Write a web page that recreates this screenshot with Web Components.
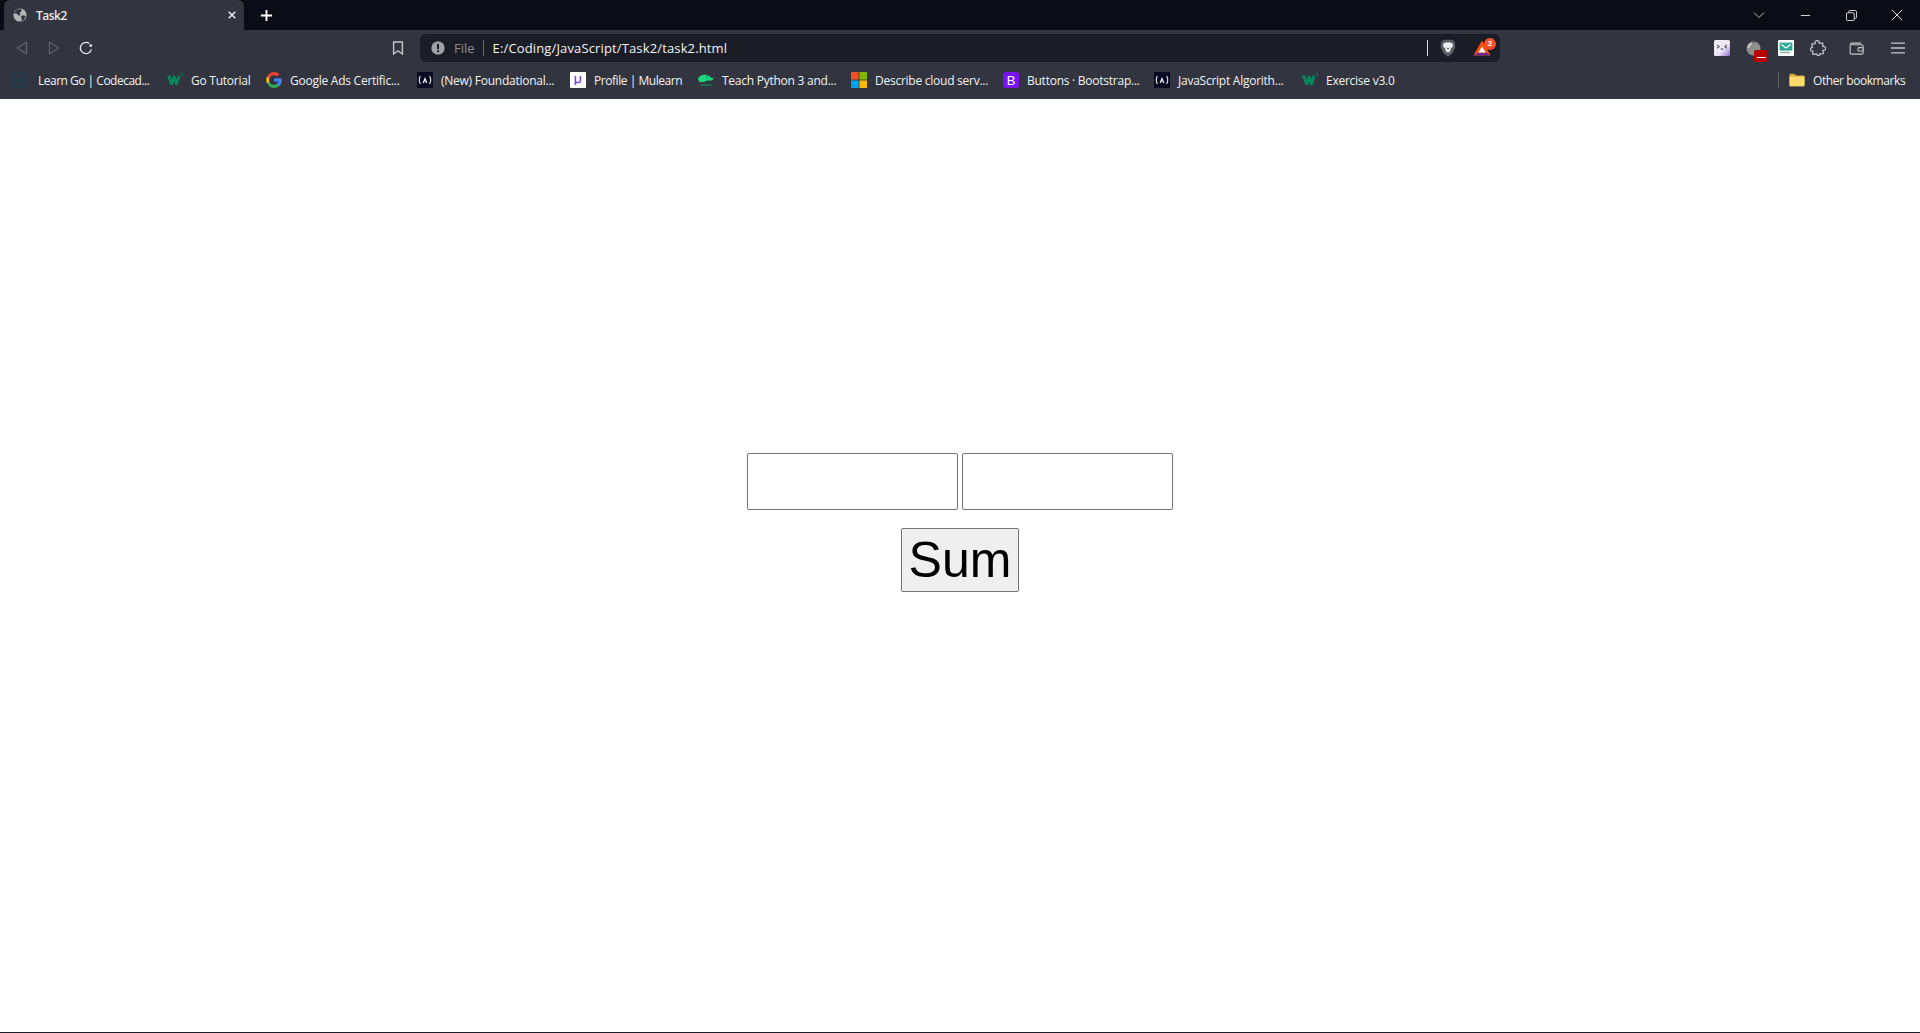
<!DOCTYPE html>
<html>
<head>
<meta charset="utf-8">
<title>Task2</title>
<style>
  html, body { margin: 0; height: 100%; background: #fff; }
  body { display: flex; flex-direction: column; height: 1033px; overflow: hidden; font-family: "Open Sans", "Liberation Sans", sans-serif; }
</style>
</head>
<body>
<browser-window>
  <tab-strip>
    <browser-tab>Task2</browser-tab>
  </tab-strip>
  <tool-bar>
    <address-bar scheme="File">E:/Coding/JavaScript/Task2/task2.html</address-bar>
  </tool-bar>
  <bookmark-bar>
    <bookmark-item icon="codecademy" width="113" style="--ls:-.5px">Learn Go | Codecad...</bookmark-item>
    <bookmark-item icon="w3" width="59">Go Tutorial</bookmark-item>
    <bookmark-item icon="google" width="111">Google Ads Certific...</bookmark-item>
    <bookmark-item icon="fcc" width="113">(New) Foundational...</bookmark-item>
    <bookmark-item icon="mulearn" width="88" style="--ls:-.45px">Profile | Mulearn</bookmark-item>
    <bookmark-item icon="python" width="113">Teach Python 3 and...</bookmark-item>
    <bookmark-item icon="microsoft" width="112">Describe cloud serv...</bookmark-item>
    <bookmark-item icon="bootstrap" width="111">Buttons · Bootstrap...</bookmark-item>
    <bookmark-item icon="fcc" width="108">JavaScript Algorith...</bookmark-item>
    <bookmark-item icon="w3" width="62">Exercise v3.0</bookmark-item>
    <bookmark-item slot="end" icon="folder" width="92" style="--ls:-.42px">Other bookmarks</bookmark-item>
  </bookmark-bar>
  <sum-page></sum-page>
</browser-window>

<script>
// all the little icons live here, keyed by name
const ICONS = {
  globe: `<svg viewBox="0 0 16 16"><circle cx="8" cy="8" r="7.500" fill="#b4b6ba"/><path d="M5 1.800 8.800 1 10 3.200 7.500 5.600 8.800 7.400 6.600 8.800 4 6.400 1.200 6.200C1.800 4.200 3.200 2.600 5 1.800ZM9 9.200 12.600 8.400 14.600 9.800 12.400 13.600 9.800 14.800 9.800 11.600Z" fill="#32353f"/></svg>`,
  close: `<svg viewBox="0 0 12 12"><path d="M2 2 10 10M10 2 2 10" stroke="#e8e9eb" stroke-width="1.800"/></svg>`,
  plus: `<svg viewBox="0 0 14 14"><path d="M7 1V13M1 7H13" stroke="#fff" stroke-width="2"/></svg>`,
  chevron: `<svg viewBox="0 0 12 12"><path d="M1 3.500 6 8.500 11 3.500" fill="none" stroke="#b9bbc0" stroke-width="1"/></svg>`,
  minimize: `<svg viewBox="0 0 12 12"><path d="M1 6H11" stroke="#e4e5e7" stroke-width="1"/></svg>`,
  restore: `<svg viewBox="0 0 12 12"><path d="M3 3V1.500C3 1 3.500 .5 4 .5H10C10.800 .5 11.500 1.200 11.500 2V8C11.500 8.500 11 9 10.500 9H9" fill="none" stroke="#e4e5e7"/><rect x=".5" y="3" width="8.500" height="8.500" rx="1.400" fill="none" stroke="#e4e5e7"/></svg>`,
  winclose: `<svg viewBox="0 0 12 12"><path d="M.8 .8 11.200 11.200M11.200 .8 .8 11.200" stroke="#e4e5e7" stroke-width="1"/></svg>`,
  back: `<svg viewBox="0 0 12 14"><path d="M10.500 1.200V12.800L1.200 7Z" fill="none" stroke="#5f626b" stroke-width="1.300" stroke-linejoin="round"/></svg>`,
  forward: `<svg viewBox="0 0 12 14"><path d="M1.500 1.200V12.800L10.800 7Z" fill="none" stroke="#5f626b" stroke-width="1.300" stroke-linejoin="round"/></svg>`,
  reload: `<svg viewBox="0 0 14 14"><path d="M12.400 8.400A5.600 5.600 0 1 1 10.200 2.400" fill="none" stroke="#e6e7e9" stroke-width="1.300"/><circle cx="11.800" cy="4.600" r="1.400" fill="#e6e7e9"/></svg>`,
  bookmark: `<svg viewBox="0 0 12 14"><path d="M1.600 1H10.400V13L6 9.800 1.600 13Z" fill="none" stroke="#c4c6ca" stroke-width="1.400"/></svg>`,
  info: `<svg viewBox="0 0 14 14"><circle cx="7" cy="7" r="6.700" fill="#9ea0a5"/><rect x="6" y="3" width="2" height="5" fill="#1a1d26"/><rect x="6" y="9.200" width="2" height="2" fill="#1a1d26"/></svg>`,
  brave: `<svg viewBox="0 0 16 18"><path d="M3.400 .8 12.600 .8 15 3.400 15.400 8 12.400 14.600 8 17.400 3.600 14.600 .6 8 1 3.400Z" fill="#5b5d66"/><path d="M3.400 4.400 6.400 3.200 8 3.800 9.600 3.200 12.600 4.400 13 7.200 10.800 9.600 10.200 12.200 8 13.600 5.800 12.200 5.200 9.600 3 7.200Z" fill="#f1f1f3"/><path d="M6.600 8.800 8 10 9.400 8.800" stroke="#5b5d66" fill="none"/></svg>`,
  bat: `<svg viewBox="0 0 18 16"><path d="M9 .4 17.600 15.400H.4Z" fill="#ff5000"/><path d="M.4 15.400 5 12.600H13L17.600 15.400Z" fill="#662d91"/><path d="M9 6.400 12.600 12.600H5.400Z" fill="#fff"/></svg>`,
  ext1: `<svg viewBox="0 0 16 16"><defs><linearGradient id="g1" x1="0" y1="0" x2="1" y2="1"><stop offset=".55" stop-color="#eeeaf4"/><stop offset="1" stop-color="#9a6fd6"/></linearGradient></defs><rect width="16" height="16" rx="1.500" fill="url(#g1)"/><path d="M3 5 5.400 6.600 3 8.200M13 5 10.600 6.600 13 8.200M6.800 9H9.200" fill="none" stroke="#2a2c38" stroke-width="1"/></svg>`,
  tomato: `<svg viewBox="0 0 16 16"><circle cx="7.500" cy="8.500" r="7" fill="#8e8e8e"/><path d="M2.500 8A5 5 0 0 1 6 3.600" fill="none" stroke="#c9c9c9" stroke-width="1.600"/><path d="M7.500 .5V3" stroke="#55565c" stroke-width="1.400"/></svg>`,
  ext3: `<svg viewBox="0 0 16 16"><rect width="16" height="16" rx="1" fill="#fff"/><rect x="1.600" y="2.600" width="12.800" height="8" fill="#2fa793"/><path d="M3.400 4.600 8 8 12.600 4.600" fill="none" stroke="#fff" stroke-width="1.200"/><rect x="2" y="11.800" width="10" height="1.400" fill="#8fa9a4"/></svg>`,
  puzzle: `<svg viewBox="0 0 16 16"><path d="M1.600 4.200 5.200 3.600C4.600 1.400 5.800 .6 7.200 .6 8.800 .6 9.800 1.800 9 3.200L12.800 3.200 12.800 6.600C14.400 5.800 15.600 7 15.600 8.400 15.600 9.800 14.200 10.800 12.800 10L13.400 13.600 9.800 13.800C10.200 14.800 9.400 15.400 8.400 15.400 7.400 15.400 6.400 14.800 6.800 13.800L2.800 14.400 2.800 11C1.600 11.400 .5 10.600 .5 9.200 .5 7.800 1.600 7.200 2.600 7.600Z" fill="none" stroke="#c4c6ca" stroke-width="1.200" stroke-linejoin="round"/></svg>`,
  wallet: `<svg viewBox="0 0 16 14"><path d="M1.200 3.400V11.600C1.200 12.400 1.800 13 2.600 13H13.600C14.400 13 15 12.400 15 11.600V4.400C15 3.600 14.400 3 13.600 3H2C1.400 3 1.200 2.400 1.600 2L2.400 1.200H12.800" fill="none" stroke="#c4c6ca" stroke-width="1.200"/><rect x="9.600" y="6" width="5.400" height="3.600" rx="1" fill="#32353f" stroke="#c4c6ca" stroke-width="1.200"/></svg>`,
  menu: `<svg viewBox="0 0 14 12"><path d="M0 1.200H14M0 6H14M0 10.800H14" stroke="#c4c6ca" stroke-width="1.300"/></svg>`,
  codecademy: `<svg viewBox="0 0 16 16"><rect x=".5" y=".5" width="10" height="15" fill="none" stroke="#1b3f4c"/><path d="M7.500 5.500H4.500V11H7.500" fill="none" stroke="#1b3f4c"/><rect x="13" y="14" width="3" height="1" fill="#1b3f4c"/></svg>`,
  w3: `<svg viewBox="0 0 16 16"><path d="M0 3.400H3.400L4.600 7.600 6.200 3.400H8.200L9.600 7.600 10.600 3.400H13.600L10.800 13H8.200L7.200 9.600 6 13H3.400Z" fill="#04875f"/><path d="M14 1H16V3.400H14.600M16 2.200H14.600" fill="none" stroke="#04875f" stroke-width=".6"/></svg>`,
  google: `<svg viewBox="0 0 16 16"><path d="M15.700 8.200c0-.6 0-1.100-.1-1.600H8v3h4.400c-.2 1-.8 1.900-1.600 2.500v2h2.600c1.500-1.400 2.300-3.400 2.300-5.900Z" fill="#4285f4"/><path d="M8 16c2.200 0 4-.7 5.400-2l-2.600-2c-.7.5-1.600.8-2.800.8-2.100 0-3.900-1.400-4.600-3.400H1.300v2.100C2.600 14.200 5.100 16 8 16Z" fill="#34a853"/><path d="M3.400 9.500c-.2-.5-.3-1-.3-1.500s.1-1 .3-1.500V4.400H1.300C.5 5.500 .2 6.700.2 8s.3 2.500 1.100 3.600Z" fill="#fbbc05"/><path d="M8 3.200c1.200 0 2.300.4 3.100 1.200l2.300-2.300C12 .8 10.200 0 8 0 5.100 0 2.600 1.800 1.300 4.400l2.100 2.100C4.100 4.600 5.900 3.200 8 3.200Z" fill="#ea4335"/></svg>`,
  fcc: `<svg viewBox="0 0 16 16"><rect width="16" height="16" fill="#0a0a23"/><path d="M3.400 4C2 6.400 2 9.600 3.400 12M12.600 4C14 6.400 14 9.600 12.600 12" fill="none" stroke="#e8e8ee" stroke-width="1.100"/><path d="M8 5 10.400 11H9L8 8.400 7 11H5.600Z" fill="#f4f4f8"/></svg>`,
  mulearn: `<svg viewBox="0 0 16 16"><rect width="16" height="16" rx="1" fill="#fff"/><path d="M5.400 4V13M5.400 10.400H9C9.800 10.400 10.400 9.800 10.400 9V4" fill="none" stroke="#7a3ff2" stroke-width="1.500"/></svg>`,
  python: `<svg viewBox="0 0 16 16"><path d="M0 7.400C.6 4.400 3.200 2.800 6.400 2.800 9.200 2.800 11.400 3.600 13 5.400L16 6.400 13.800 8.600 8 8.800 6.600 10H1.400Z" fill="#1fd27e"/><circle cx="9.400" cy="5" r=".8" fill="#0a5c3a"/><path d="M2.600 13H13.400" stroke="#1a7d52" stroke-width="1.500"/></svg>`,
  microsoft: `<svg viewBox="0 0 16 16"><rect width="7.600" height="7.600" fill="#f25022"/><rect x="8.400" width="7.600" height="7.600" fill="#7fba00"/><rect y="8.400" width="7.600" height="7.600" fill="#00a4ef"/><rect x="8.400" y="8.400" width="7.600" height="7.600" fill="#ffb900"/></svg>`,
  bootstrap: `<svg viewBox="0 0 16 16"><rect width="16" height="16" rx="3" fill="#7a12f5"/><text x="8" y="12.500" text-anchor="middle" font-family="Liberation Sans, sans-serif" font-size="13" fill="#fff">B</text></svg>`,
  folder: `<svg viewBox="0 0 16 14"><path d="M.5 2C.5 1.200 1 .8 1.600 .8H5.400L7 2.400H14C15 2.400 15.500 3 15.500 3.800V12C15.500 12.800 15 13.300 14.200 13.300H1.800C1 13.300 .5 12.800 .5 12Z" fill="#d9a93a"/><path d="M.5 4.600C.5 4 1 3.600 1.600 3.600H14.400C15 3.600 15.500 4 15.500 4.600V12C15.500 12.800 15 13.300 14.200 13.300H1.800C1 13.300 .5 12.800 .5 12Z" fill="#fbdb6c"/></svg>`,
};

class UiIcon extends HTMLElement {
  constructor() {
    super();
    this.attachShadow({ mode: "open" });
    const size = this.getAttribute("size") || 16;
    this.shadowRoot.innerHTML = `
      <style>
        :host { display: inline-flex; flex: none; width: ${size}px; height: ${size}px; }
        svg { width: 100%; height: 100%; display: block; }
      </style>
      ${ICONS[this.getAttribute("name")] || ""}
    `;
  }
}

class ToolButton extends HTMLElement {
  constructor() {
    super();
    this.attachShadow({ mode: "open" });
    this.shadowRoot.innerHTML = `
      <style>
        :host { display: flex; flex: none; position: relative; width: 32px; height: 28px; align-items: center; justify-content: center; }
      </style>
      <slot></slot>
    `;
  }
}

class BrowserWindow extends HTMLElement {
  constructor() {
    super();
    this.attachShadow({ mode: "open" });
    this.shadowRoot.innerHTML = `
      <style>
        :host { display: flex; flex-direction: column; height: 1033px; border-bottom: 1px solid #1a1d26; box-sizing: border-box; }
      </style>
      <slot></slot>
    `;
  }
}

class TabStrip extends HTMLElement {
  constructor() {
    super();
    this.attachShadow({ mode: "open" });
    this.shadowRoot.innerHTML = `
      <style>
        :host { display: flex; flex: none; height: 30px; background: #0b0c16; padding-left: 4px; align-items: stretch; }
        .plus { display: flex; width: 34px; margin-left: 5px; align-items: center; justify-content: center; }
        .controls { display: flex; margin-left: auto; align-items: center; }
        .controls div { display: flex; width: 46px; justify-content: center; align-items: center; }
      </style>
      <slot></slot>
      <div class="plus"><ui-icon name="plus" size="13"></ui-icon></div>
      <div class="controls">
        <div><ui-icon name="chevron" size="12"></ui-icon></div>
        <div><ui-icon name="minimize" size="11"></ui-icon></div>
        <div><ui-icon name="restore" size="11"></ui-icon></div>
        <div><ui-icon name="winclose" size="12"></ui-icon></div>
      </div>
    `;
  }
}

class BrowserTab extends HTMLElement {
  constructor() {
    super();
    this.attachShadow({ mode: "open" });
    this.shadowRoot.innerHTML = `
      <style>
        :host { display: flex; width: 240px; box-sizing: border-box; padding: 0 7px 0 9px; gap: 9px; align-items: center;
                background: #32353f; border-radius: 6px 6px 0 0; color: #e8e9eb; font: 600 12px "Open Sans", sans-serif; }
        .title { flex: 1; letter-spacing: -.5px; }
      </style>
      <ui-icon name="globe" size="14"></ui-icon>
      <span class="title"><slot></slot></span>
      <ui-icon name="close" size="10"></ui-icon>
    `;
  }
}

class ToolBar extends HTMLElement {
  constructor() {
    super();
    this.attachShadow({ mode: "open" });
    this.shadowRoot.innerHTML = `
      <style>
        :host { display: flex; flex: none; height: 36px; background: #32353f; padding: 0 6px; align-items: center; }
        .ext { display: flex; margin-left: auto; }
        .badge { position: absolute; left: 16px; top: 16px; width: 14px; height: 12px; border-radius: 2px; background: #b80000; }
        .badge::after { content: ""; position: absolute; left: 2.500px; top: 7px; width: 9px; height: 1px; background: #fff; }
      </style>
      <tool-button><ui-icon name="back" size="14"></ui-icon></tool-button>
      <tool-button><ui-icon name="forward" size="14"></ui-icon></tool-button>
      <tool-button><ui-icon name="reload" size="14"></ui-icon></tool-button>
      <tool-button style="margin-left:280px"><ui-icon name="bookmark" size="14"></ui-icon></tool-button>
      <slot></slot>
      <div class="ext">
        <tool-button><ui-icon name="ext1"></ui-icon></tool-button>
        <tool-button><ui-icon name="tomato"></ui-icon><span class="badge"></span></tool-button>
        <tool-button><ui-icon name="ext3"></ui-icon></tool-button>
        <tool-button><ui-icon name="puzzle"></ui-icon></tool-button>
        <tool-button style="margin-left:6px"><ui-icon name="wallet" size="15"></ui-icon></tool-button>
        <tool-button style="margin-left:10px"><ui-icon name="menu" size="14"></ui-icon></tool-button>
      </div>
    `;
  }
}

class AddressBar extends HTMLElement {
  constructor() {
    super();
    this.attachShadow({ mode: "open" });
    this.shadowRoot.innerHTML = `
      <style>
        :host { display: flex; flex: none; position: relative; box-sizing: border-box; width: 1080px; height: 28px; margin-left: 6px; padding: 0 0 0 11px;
                align-items: center; background: #1a1d26; border-radius: 6px; color: #f2f2f4; font: 13px "Open Sans", sans-serif; }
        .scheme { color: #8b8d93; margin-left: 9px; }
        .sep { width: 1px; height: 16px; background: #63666d; flex: none; }
        .sep.left { margin: 0 9px 0 8px; }
        .sep.right { margin-left: auto; background: #d8d9db; }
        .url { letter-spacing: .14px; }
        .shield { margin-left: 11px; }
        .bat { display: flex; margin: 0 9px 0 16px; position: relative; }
        .count { position: absolute; left: 11px; top: -1px; width: 12px; height: 12px; border-radius: 50%; background: #f4502a; color: #fff;
                 font: 700 8px/12px "Liberation Sans", sans-serif; text-align: center; }
      </style>
      <ui-icon name="info" size="14"></ui-icon>
      <span class="scheme">${this.getAttribute("scheme")}</span>
      <span class="sep left"></span>
      <span class="url"><slot></slot></span>
      <span class="sep right"></span>
      <ui-icon class="shield" name="brave" size="18"></ui-icon>
      <span class="bat"><ui-icon name="bat" size="18"></ui-icon><span class="count">2</span></span>
    `;
  }
}

class BookmarkBar extends HTMLElement {
  constructor() {
    super();
    this.attachShadow({ mode: "open" });
    this.shadowRoot.innerHTML = `
      <style>
        :host { display: flex; flex: none; height: 33px; box-sizing: border-box; padding: 0 15px 5px 14px; background: #32353f; align-items: center; gap: 16px; }
        .end { display: flex; margin-left: auto; align-items: center; gap: 10px; }
        .end i { width: 1px; height: 16px; background: #5a5d65; }
      </style>
      <slot></slot>
      <div class="end"><i></i><slot name="end"></slot></div>
    `;
  }
}

class BookmarkItem extends HTMLElement {
  constructor() {
    super();
    this.attachShadow({ mode: "open" });
    this.shadowRoot.innerHTML = `
      <style>
        :host { display: flex; flex: none; align-items: center; gap: 8px; color: #f1f2f4; font: 12px "Open Sans", sans-serif; }
        .label { display: block; width: ${this.getAttribute("width")}px; white-space: nowrap; letter-spacing: var(--ls, -0.25px); }
      </style>
      <ui-icon name="${this.getAttribute("icon")}"></ui-icon>
      <span class="label"><slot></slot></span>
    `;
  }
}

// the actual task2.html page: two inputs and the button
class SumPage extends HTMLElement {
  constructor() {
    super();
    this.attachShadow({ mode: "open" });
    this.shadowRoot.innerHTML = `
      <style>
        :host { display: flex; flex: 1; flex-direction: column; align-items: center; background: #fff; padding-top: 354px; }
        .inputs { display: flex; gap: 4px; }
        input { width: 211px; height: 57px; box-sizing: border-box; margin: 0; padding: 0; border: 1px solid #767676; border-radius: 2px; background: #fff; font: 16px "Liberation Sans", sans-serif; }
        button { width: 118px; height: 64px; box-sizing: border-box; margin: 18px 0 0; padding: 0; border: 1px solid #767676; border-radius: 2px; background: #efefef; color: #000;
                 font: 50px "Liberation Sans", Arial, sans-serif; }
      </style>
      <div class="inputs">
        <input type="text">
        <input type="text">
      </div>
      <button type="button">Sum</button>
    `;
  }
}

customElements.define("ui-icon", UiIcon);
customElements.define("tool-button", ToolButton);
customElements.define("browser-window", BrowserWindow);
customElements.define("tab-strip", TabStrip);
customElements.define("browser-tab", BrowserTab);
customElements.define("tool-bar", ToolBar);
customElements.define("address-bar", AddressBar);
customElements.define("bookmark-bar", BookmarkBar);
customElements.define("bookmark-item", BookmarkItem);
customElements.define("sum-page", SumPage);
</script>
</body>
</html>
